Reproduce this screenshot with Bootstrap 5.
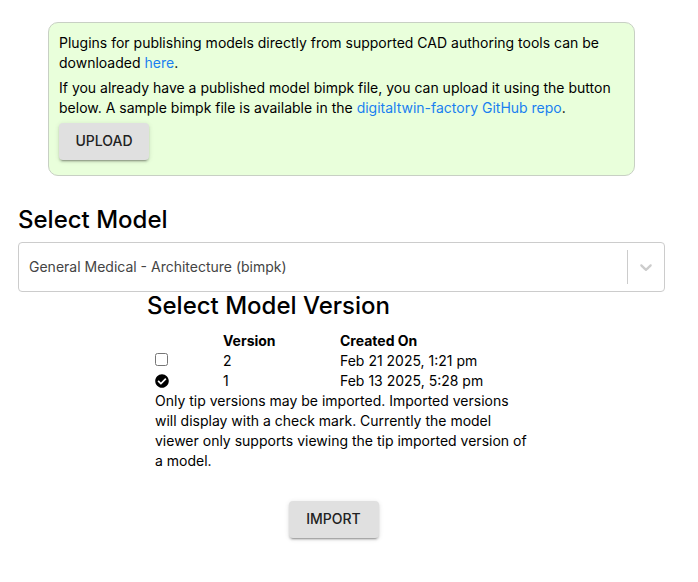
<!DOCTYPE html>
<html lang="en">
<head>
<meta charset="utf-8">
<meta name="viewport" content="width=device-width, initial-scale=1">
<title>Import Model</title>
<link href="https://cdn.jsdelivr.net/npm/bootstrap@5.3.0/dist/css/bootstrap.min.css" rel="stylesheet">
<style>
body{font-family:Inter,sans-serif;font-size:14px;line-height:20px;color:#000}
main{padding:22px 33px 32px 18px}
.info-panel{margin:0 30px;padding:10px 10px 15px;background:#e9ffdb;border:1px solid #c8d0c4;border-radius:10px}
.info-panel p{margin-bottom:5px}
.info-panel a{color:#1a7ff0;text-decoration:none}
.raised-btn{min-width:90px;padding:8px 15px 9px;font-size:14px;line-height:20px;font-weight:500;background:#e0e0e0;color:#222;border-radius:4px;border:0;box-shadow:0 3px 1px -2px rgba(0,0,0,.2),0 2px 2px rgba(0,0,0,.14),0 1px 5px rgba(0,0,0,.12)}
.section-title{font-size:24px;line-height:28px;font-weight:500;margin:0}
.model-title{margin:30px 0 8px}
.model-select{height:50px;font-size:14px;color:#444;border:1px solid #ccc;border-radius:4px;padding:0 10px;background:#fff;width:100%;appearance:none}
.select-wrap{position:relative}
.select-mark{position:absolute;right:0;top:0;bottom:0;pointer-events:none;width:38px;padding-right:1px}
.select-mark .vr{color:#ccc;opacity:1}
.version-area{width:389px;margin:0 auto;max-width:100%}
.version-body{padding:11px 8px 0}
.version-table{width:100%;margin:0}
.version-table th,.version-table td{padding:0;line-height:20px;vertical-align:top}
.tip-box{width:13px;height:13px;margin:2px 0 0;display:block}
.done-icon{display:block;margin-top:3px}
.import-row{margin-top:30px}
</style>
<script src="https://cdn.jsdelivr.net/npm/bootstrap@5.3.0/dist/js/bootstrap.bundle.min.js"></script>
</head>
<body>
<main>
<section class="info-panel">
<p>Plugins for publishing models directly from supported CAD authoring tools can be downloaded <a href="#">here</a>.</p>
<p>If you already have a published model bimpk file, you can upload it using the button below. A sample bimpk file is available in the <a href="#">digitaltwin-factory GitHub repo</a>.</p>
<button type="button" class="btn raised-btn">UPLOAD</button>
</section>
<h2 class="section-title model-title"><label for="model">Select Model</label></h2>
<div class="select-wrap">
<select id="model" class="model-select d-block"><option>General Medical - Architecture (bimpk)</option></select>
<span class="select-mark d-flex align-items-center"><span class="vr my-2"></span>
<svg class="mx-auto" width="20" height="20" viewBox="0 0 20 20" fill="#ccc" aria-hidden="true"><path d="M4.516 7.548c.436-.446 1.043-.481 1.576 0L10 11.295l3.908-3.747c.533-.481 1.141-.446 1.574 0 .436.445.408 1.197 0 1.615-.406.418-4.695 4.502-4.695 4.502a1.095 1.095 0 0 1-1.576 0S4.924 9.581 4.516 9.163s-.436-1.17 0-1.615z"/></svg></span>
</div>
<section class="version-area">
<h2 class="section-title">Select Model Version</h2>
<div class="version-body">
<table class="version-table"><colgroup><col style="width:68px"><col style="width:117px"><col></colgroup>
<thead><tr><th></th><th>Version</th><th>Created On</th></tr></thead>
<tbody><tr><td><input type="checkbox" class="tip-box" aria-label="Import version 2"></td><td>2</td><td>Feb 21 2025, 1:21 pm</td></tr>
<tr><td><svg class="done-icon" width="14" height="14" viewBox="0 0 512 512" role="img" aria-label="Imported"><path d="M504 256c0 136.967-111.033 248-248 248S8 392.967 8 256 119.033 8 256 8s248 111.033 248 248zM227.314 387.314l184-184c6.248-6.248 6.248-16.379 0-22.627l-22.627-22.627c-6.248-6.249-16.379-6.249-22.628 0L216 308.118l-70.059-70.059c-6.248-6.248-16.379-6.248-22.628 0l-22.627 22.627c-6.248 6.248-6.248 16.379 0 22.627l104 104c6.249 6.249 16.379 6.249 22.628.001z"/></svg></td><td>1</td><td>Feb 13 2025, 5:28 pm</td></tr></tbody></table>
<p class="mb-0">Only tip versions may be imported. Imported versions will display with a check mark. Currently the model viewer only supports viewing the tip imported version of a model.</p>
</div>
</section>
<div class="import-row text-center pe-3"><button type="button" class="btn raised-btn">IMPORT</button></div>
</main>
</body>
</html>
